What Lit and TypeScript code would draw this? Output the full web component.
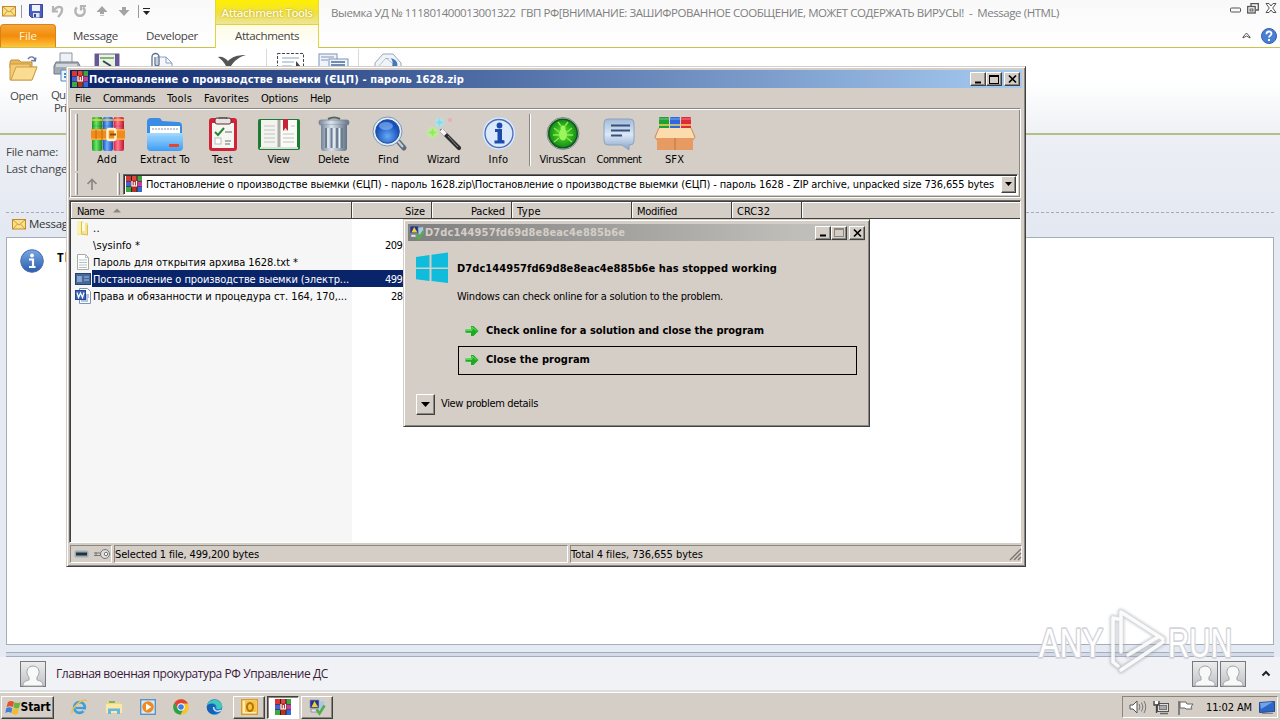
import { LitElement, html, css, svg } from "lit";
import { customElement, property } from "lit/decorators.js";
import { styleMap } from "lit/directives/style-map.js";

/* A single line of text whose tracking is adjusted so that it fills `w` pixels. */
@customElement("fit-text")
class FitText extends LitElement {
  @property() text = "";
  @property({ type: Number }) w = 0;
  static styles = css`
    :host { display: inline-block; white-space: pre; flex: none; }
  `;
  render() {
    return html`<span>${this.text}</span>`;
  }
  updated() {
    const s = this.renderRoot.querySelector("span") as HTMLElement;
    s.style.letterSpacing = "0";
    const n = this.text.length;
    const natural = s.getBoundingClientRect().width;
    s.style.letterSpacing = (this.w - natural) / n + "px";
    this.style.width = this.w + "px";
  }
}

const t = (text: string, w: number) => html`<fit-text .text=${text} .w=${w}></fit-text>`;
const ico = (w: number, h: number, body: unknown, vb = `0 0 ${w} ${h}`) =>
  html`<svg width=${w} height=${h} viewBox=${vb} fill="none">${body}</svg>`;

/* ---------- icons ---------- */
const mail = ico(14, 12, svg`<rect x=".5" y="1.500" width="13" height="9.500" fill="#fbe08a" stroke="#c08a2a"/><path d="M1 2l6 5 6-5M1 11l4.500-5M13 11L8.500 6" stroke="#c08a2a" stroke-width=".8"/>`);
const save = ico(14, 14, svg`<path d="M.5.5h13v13H2.500L.5 11.500z" fill="#4a5fc0" stroke="#37479c"/><rect x="3" y="1" width="8" height="6" fill="#eef2fb"/><rect x="4" y="9" width="6.500" height="4.500" fill="#dfe3ee"/><rect x="5" y="10" width="2" height="3" fill="#37479c"/>`);
const undo = ico(14, 14, svg`<path d="M2 2v5.500h5" stroke="#b4b4b4" stroke-width="2.200"/><path d="M3 6.500c3-5 8.500-4.500 8-.5 0 3-2 5-4 7" stroke="#b4b4b4" stroke-width="2.400"/>`);
const redo = ico(14, 14, svg`<path d="M4 3.500a4.700 4.700 0 1 0 6 0" stroke="#b4b4b4" stroke-width="2.400"/><path d="M8 6.500V2h5" stroke="#b4b4b4" stroke-width="2.200"/>`);
const upA = ico(14, 12, svg`<path d="M7 1l5.500 6H9v2H5V7H1.500z" fill="#a4a4a4"/><path d="M5 10.500h4" stroke="#c4c4c4"/>`);
const dnA = ico(14, 12, svg`<path d="M7 11l5.500-6H9V2H5v3H1.500z" fill="#a4a4a4"/>`);
const openF = ico(32, 28, svg`<path d="M2 7l1-2h8l2 2h11v6H2z" fill="#e8b75a" stroke="#c0903c"/><path d="M2 25L2 9h20v3h7L24 25z" fill="#f5ca70" stroke="#c79a48"/><path d="M8 12h21l-5 13H3z" fill="#fbdc93" stroke="#cf9f49"/><path d="M20 4c2-3 6-3 7 1M28 2.500l-.8 3.500-4-.5" stroke="#65799a" stroke-width="1.400"/>`);
const printer = ico(28, 30, svg`<path d="M7 0h12v10H7z" fill="#eef1f6" stroke="#8d95a3"/><path d="M3 9h22l2 4v8H1v-8z" fill="#a4aab3" stroke="#727982"/><path d="M3 11h21v3H3z" fill="#d3d7dc"/><path d="M8 17h15v11H8z" fill="#edf6ff" stroke="#4b89c8"/><path d="M11 21h8M11 24h8" stroke="#4b89c8" stroke-width="2"/>`);
const film = ico(26, 14, svg`<rect x="1" y="1" width="24" height="13" fill="#e9f3e4" stroke="#768"/><path d="M3 1v13M23 1v13" stroke="#66559b" stroke-width="4"/><path d="M6 5h14" stroke="#5da34f" stroke-width="1.500"/><path d="M9 8l8 5" stroke="#345" stroke-width="2"/>`);
const clip = ico(26, 14, svg`<path d="M8 4h9l6 6v4H8z" fill="#f4f7fc" stroke="#8ea2c0"/><path d="M17 4v6h6" stroke="#8ea2c0"/><path d="M3 14V4a3.500 3.500 0 0 1 7 0v7a2 2 0 0 1-4 0V4" stroke="#5b6f8e" stroke-width="1.300"/>`);
const check = ico(32, 14, svg`<path d="M2 4c4-1 7 1 10 4 4-4 9-6 18-6-7 2-12 6-15 11h-5C8 9 5 6 2 4z" fill="#555"/>`);
const selectB = ico(28, 14, svg`<rect x=".5" y=".5" width="26" height="15" stroke="#444" stroke-dasharray="3 1.500"/><path d="M5 5h17M5 9h12M5 13h10" stroke="#8fa3c4"/><path d="M19 8l5 6h-5z" fill="#444"/>`);
const copy = ico(32, 14, svg`<rect x="1" y="1" width="18" height="14" fill="#eff4fb" stroke="#7d93b5"/><path d="M3 4h13M3 7h7" stroke="#7d93b5"/><rect x="11" y="6" width="19" height="10" fill="#eff4fb" stroke="#7d93b5"/><path d="M13 9h14M13 12h14" stroke="#48699b" stroke-width="1.500"/>`);
const openMsg = ico(30, 14, svg`<path d="M2 10L10 1h10l8 9v5H2z" fill="#f0f3f8" stroke="#99a6bb"/><path d="M5 14L13 5l11 9" stroke="#b9c3d2"/><path d="M12 6c6-3 9 1 7 8h5c2-5-3-11-12-8z" fill="#3f78bd"/>`);

const rar = (s: number) => ico(s, s, svg`<rect x="0" y="0" width="16" height="16" fill="#1d2430"/><rect x="0" y="0" width="5" height="5" fill="#d8362f"/><rect x="6" y="0" width="4.500" height="5" fill="#e2433c"/><rect x="11.500" y="0" width="4.500" height="5" fill="#43a23c"/><rect x="0" y="5.500" width="5" height="5" fill="#4a5ed0"/><rect x="11.500" y="5.500" width="4.500" height="5" fill="#c63ea4"/><rect x="0" y="11" width="5" height="5" fill="#3ea93d"/><rect x="6" y="11" width="4.500" height="5" fill="#b9341f"/><rect x="11.500" y="11" width="4.500" height="5" fill="#3169d8"/><rect x="5" y="4.500" width="6.500" height="7" fill="#a8281f"/><path d="M6 5v5h4.500V5M8.300 6v4" stroke="#fff" stroke-width="1.200"/>`, "0 0 16 16");

const add = ico(36, 36, svg`<defs><linearGradient id="a1"><stop stop-color="#1d9a20"/><stop offset=".4" stop-color="#6be86a"/><stop offset="1" stop-color="#14801a"/></linearGradient><linearGradient id="a2"><stop stop-color="#1c53c8"/><stop offset=".4" stop-color="#6fb2ff"/><stop offset="1" stop-color="#1746b0"/></linearGradient><linearGradient id="a3"><stop stop-color="#d8203c"/><stop offset=".4" stop-color="#ff7a94"/><stop offset="1" stop-color="#c4142c"/></linearGradient></defs><rect x="3" y="1" width="10.500" height="34" rx="2" fill="url(#a1)"/><rect x="14" y="1" width="10" height="34" rx="2" fill="url(#a2)"/><rect x="24.500" y="1" width="10.500" height="34" rx="2" fill="url(#a3)"/><path d="M3 4h10M14 4h10M25 4h10" stroke="#f6d13e" stroke-width="2" opacity=".7"/><path d="M3 10h32" stroke="#2f3f5c" opacity=".25"/><rect x="2" y="13" width="34" height="11" rx="1" fill="#f08c1c"/><path d="M2 14h34M2 23h34" stroke="#ffc25c"/><path d="M13 13v11M7 14v9" stroke="#c26a12" stroke-width="1"/><rect x="18.500" y="13" width="8" height="11" rx="2" stroke="#fff3d0" stroke-width="2.500"/><path d="M21 18.500h6" stroke="#8b4a0c" stroke-width="2"/>`);
const extract = ico(38, 36, svg`<path d="M1 6q0-4 4-4h8q2 0 3 3l16 1q4 0 4 4v10H1z" fill="#3a8de4"/><path d="M4 10h30v9H4z" fill="#fff"/><path d="M6 13h26" stroke="#8694a8" stroke-dasharray="2 1"/><defs><linearGradient id="e1" x2="0" y2="1"><stop stop-color="#a4dbff"/><stop offset="1" stop-color="#3c9cf4"/></linearGradient></defs><path d="M1 17h36v14q0 4-4 4H5q-4 0-4-4z" fill="url(#e1)"/><path d="M2 21h34M2 25h34" stroke="#83c4f8" opacity=".7"/><rect x="23" y="28" width="10" height="3" rx="1" fill="#e8432c"/>`);
const test = ico(32, 36, svg`<rect x="2" y="2" width="28" height="33" rx="3" fill="#cf2438"/><rect x="5" y="7" width="22" height="25" fill="#f5f5f2"/><rect x="8" y="2" width="16" height="6" rx="2" fill="#e4e4e4" stroke="#662830"/><path d="M12 3v-1h8v1" stroke="#444"/><path d="M8 16l3 3 6-7" stroke="#268635" stroke-width="2"/><path d="M18 16h7M18 25h6M18 28h5" stroke="#999" stroke-width="1.500"/><rect x="8" y="22" width="6" height="6" fill="#fff" stroke="#bbb"/>`);
const view = ico(44, 36, svg`<rect x="1" y="3" width="42" height="31" rx="2" fill="#1d7b32"/><path d="M4 4h17v27H4z" fill="#f3f3f0"/><path d="M23 4h17v27H23z" fill="#fafaf7"/><path d="M20.500 4h3v28h-3z" fill="#a9aaa4"/><path d="M3 32h38" stroke="#ddd" stroke-width="2"/><path d="M7 10h11M7 14h11M7 18h11M7 22h11M7 26h11M26 18h11M26 14h4M34 10h4M26 22h11M26 26h11" stroke="#c3c3bd"/><path d="M26 3h5v12l-2.500-3-2.500 3z" fill="#c62437"/>`);
const trash = ico(34, 36, svg`<defs><linearGradient id="t1"><stop stop-color="#76869a"/><stop offset=".4" stop-color="#dae3ec"/><stop offset="1" stop-color="#627386"/></linearGradient></defs><path d="M11 3q6-3 12 0" stroke="#566" stroke-width="2"/><rect x="2" y="4" width="30" height="5" rx="2" fill="url(#t1)" stroke="#6b7b8f" stroke-width=".7"/><path d="M4 9h26v23q0 3-3 3H7q-3 0-3-3z" fill="url(#t1)"/><path d="M9 12v20M14.500 12v20M20 12v20M25 12v20" stroke="#6b7f93" stroke-width="2"/><path d="M11 12v20M17 12v20M22.500 12v20" stroke="#eef3f8" stroke-width="1.300"/>`);
const find = ico(36, 36, svg`<path d="M25 23l8 9" stroke="#5c6c7b" stroke-width="5" stroke-linecap="round"/><path d="M26 24l6 7" stroke="#c6d0d9" stroke-width="2"/><defs><radialGradient id="f1" cy=".7"><stop stop-color="#65aaf4"/><stop offset="1" stop-color="#1751bd"/></radialGradient></defs><circle cx="16.500" cy="15.500" r="14.500" fill="#e5eef8" stroke="#7c95b4"/><circle cx="16.500" cy="15.500" r="11.800" fill="url(#f1)" stroke="#244d94"/><ellipse cx="15" cy="10" rx="7" ry="4" fill="#8dbcf6" opacity=".6"/>`);
const wizard = ico(36, 36, svg`<path d="M16 15l17 17" stroke="#2e2e32" stroke-width="4.200" stroke-linecap="round"/><path d="M15 14l4.500 4.500" stroke="#f3f3f3" stroke-width="4"/><path d="M22 20l10 11" stroke="#8c8c90"/><circle cx="13.500" cy="6.500" r="5" fill="#9ee9f7" opacity=".55"/><path d="M13.500 2.500l1 3 3 1-3 1-1 3-1-3-3-1 3-1z" fill="#72dff4"/><circle cx="6.500" cy="16.500" r="6" fill="#b8f58c" opacity=".6"/><path d="M6.500 12l1.200 3.300 3.300 1.200-3.300 1.200-1.200 3.300-1.200-3.300L2 16.500l3.300-1.200z" fill="#8df04c"/><circle cx="24" cy="4" r="2" fill="#f4a3ad" opacity=".8"/>`);
const info = ico(36, 36, svg`<circle cx="18" cy="17.500" r="16.500" fill="#e4edfa" stroke="#c5cfdf"/><circle cx="18" cy="17.500" r="14" fill="#dce9fc" stroke="#4b6fb9" stroke-width="1.400"/><circle cx="18.500" cy="9.500" r="2.900" fill="#1c4cab"/><path d="M14 14.500h5.500v11h3M13.500 26h10" stroke="#1c4cab" stroke-width="3"/><path d="M18.500 14v12" stroke="#1c4cab" stroke-width="4"/>`);
const virus = ico(36, 36, svg`<circle cx="18" cy="17.500" r="16" fill="#c9d2c9" stroke="#7a8f80"/><defs><radialGradient id="v1"><stop stop-color="#64e832"/><stop offset="1" stop-color="#118a14"/></radialGradient></defs><circle cx="18" cy="17.500" r="14.300" fill="url(#v1)" stroke="#14532a" stroke-width="1.500"/><ellipse cx="18" cy="18.500" rx="4" ry="6" fill="#9bf55c"/><circle cx="18" cy="12" r="2.500" fill="#9bf55c"/><path d="M14 16l-5-4M22 16l5-4M14 19H8M22 19h6M14 22l-5 4M22 22l5 4M16 10l-3-4M20 10l3-4" stroke="#8aea4d" stroke-width="1.400"/>`);
const comment = ico(36, 36, svg`<defs><linearGradient id="c1" x2="0" y2="1"><stop stop-color="#a2bad8"/><stop offset=".5" stop-color="#dbe8f6"/><stop offset="1" stop-color="#86a3c9"/></linearGradient></defs><path d="M7 3h22q4 0 4 4v18q0 4-4 4h-1v5l-7-5H7q-4 0-4-4V7q0-4 4-4z" fill="url(#c1)" stroke="#8ba2c2"/><path d="M10 9.500h19M10 14.500h19M10 19.500h11" stroke="#37517c" stroke-width="2"/>`);
const sfx = ico(40, 36, svg`<rect x="4" y="1" width="10" height="16" rx="1" fill="#21a035"/><rect x="15" y="1" width="10" height="16" rx="1" fill="#2f69dd"/><rect x="26" y="1" width="10" height="16" rx="1" fill="#e02a3b"/><path d="M4 9h10M15 9h10M26 9h10" stroke="#f4d552" stroke-width="1.500"/><path d="M4 3h10M15 3h10M26 3h10" stroke="#fff" opacity=".4"/><path d="M2 21h36v13H2z" fill="#e79a62"/><path d="M20 21v13" stroke="#c4743e"/><path d="M4 12h32l3 10H1z" fill="#fbdcae"/><path d="M4 12l-4 9 2 3M36 12l4 9-2 3" stroke="#d98a50"/>`);

const folder = ico(16, 16, svg`<path d="M2 1h5l2 2h4v12H2z" fill="#f5e496"/><path d="M2 1h4v13H2z" fill="#fbf0b4"/><path d="M7 3h3v8H7z" fill="#fffbe0"/><path d="M6.500 2v12l6 1V5" stroke="#dcc04e"/>`);
const txt = ico(16, 16, svg`<path d="M2.500.5h8l3 3v12h-11z" fill="#fff" stroke="#a7aaa7"/><path d="M10.500.5v3h3M4 6h8M4 8.500h8M4 11h8M4 13.500h8" stroke="#b7c1c4"/>`);
const exe = ico(16, 16, svg`<rect x=".5" y="2.500" width="15" height="11" fill="#45679c" stroke="#24406e"/><rect x="2" y="5" width="5" height="6" fill="#86a5cc"/><path d="M9 6h5M9 9h5" stroke="#a8bddd"/>`);
const doc = ico(16, 16, svg`<path d="M4.500.5h8l3 3v12h-11z" fill="#fff" stroke="#7b93bd"/><path d="M11 7h3M11 9h3M8 11h5M6 13h7" stroke="#6b8bc4"/><rect x=".5" y="2.500" width="10" height="9" fill="#3b66b5" stroke="#24468a"/><path d="M2 4.500l1.500 5 2-4.500 2 4.500L9 4.500" stroke="#fff" stroke-width="1.200"/>`);
const arrowUp = ico(14, 14, svg`<path d="M7 13V3M2.500 7L7 2.500 11.500 7" stroke="#8a8783" stroke-width="1.700"/>`);
const tri = ico(9, 5, svg`<path d="M0 0h9L4.500 5z" fill="#000"/>`);

const infoBall = (s: number) => ico(s, s, svg`<defs><linearGradient id="ib" x2="0" y2="1"><stop stop-color="#78a8e2"/><stop offset="1" stop-color="#2a5cb0"/></linearGradient></defs><circle cx="12" cy="12" r="11.300" fill="url(#ib)" stroke="#4a6fae"/><circle cx="12" cy="6.500" r="1.900" fill="#fff"/><path d="M9 10.500h4v7M9 18h6.500" stroke="#fff" stroke-width="2.200"/>`, "0 0 24 24");
const helpBall = ico(16, 16, svg`<circle cx="8" cy="8" r="7.500" fill="#4a80d4" stroke="#3660ac"/><path d="M5.500 6.200c0-3.500 5-3.500 5-.6 0 2-2.500 2-2.500 4" stroke="#fff" stroke-width="1.800"/><rect x="7" y="11" width="2" height="2" fill="#fff"/>`);
const winMin = ico(11, 10, svg`<rect x=".5" y="5" width="10" height="4" rx="1" stroke="#555"/>`);
const winRes = ico(12, 11, svg`<path d="M4 3V.7h7.300V7H9" stroke="#555" stroke-width="1.300"/><rect x=".7" y="3.500" width="7.500" height="6.500" stroke="#555" stroke-width="1.300"/><rect x="3" y="6" width="3" height="2" stroke="#555"/>`);
const winX = ico(12, 10, svg`<path d="M1 .5h3l2 2.500L8 .5h3L7.700 5 11 9.500H8L6 7 4 9.500H1L4.300 5z" fill="#fff" stroke="#555"/>`);

const person = ico(26, 26, svg`<defs><linearGradient id="pg" x2="0" y2="1"><stop stop-color="#ededee"/><stop offset="1" stop-color="#bfc1c4"/></linearGradient></defs><rect x=".5" y=".5" width="25" height="25" fill="url(#pg)" stroke="#77797d"/><path d="M3 25c0-4 2-5 6-6v-3c-4-4-2-11 4-11s8 7 4 11v3c4 1 6 2 6 6z" fill="#f8f8f8" stroke="#a2a4a7"/>`);

const winFlag = ico(16, 15, svg`<path d="M3 2q3-2 6 0L8 7Q5 5.500 1.500 7z" fill="#e5512a"/><path d="M9.500 2.300q3 1.500 6 0L14 8q-3 1.200-5.500-.5z" fill="#6cb33e"/><path d="M1.300 8q3-1.500 6 0l-1 5q-3-2-6 0z" fill="#3f7fd8"/><path d="M8 8.500q3 1.300 6 0L12.500 14q-3 1.400-5.500-.5z" fill="#f5bb22"/>`);
const ie = ico(17, 16, svg`<circle cx="8.500" cy="8.500" r="5.300" stroke="#3c9edb" stroke-width="2.800"/><path d="M5 9h9" stroke="#3c9edb" stroke-width="2.200"/><path d="M12 10.500h4v2h-4z" fill="#d4cec7"/><path d="M1 14.500C0 9 11-1 16 1.500" stroke="#efc144" stroke-width="1.500"/>`);
const explorer = ico(18, 16, svg`<path d="M2 2h5l1 1.500h8V8H2z" fill="#efd782"/><path d="M1 5h16v9H1z" fill="#fae8a4"/><path d="M3 15V9.500h12V15h-3v-3H6v3z" fill="#67b7de"/><path d="M4 3h6" stroke="#58a95c" stroke-width="1.500"/>`);
const wmp = ico(16, 16, svg`<rect x=".7" y=".7" width="14.600" height="14.600" fill="#d5e9f8" stroke="#5b93c9" stroke-width="1.400"/><circle cx="8" cy="8" r="5.800" fill="#f08a1d"/><path d="M6 4.500L11.500 8 6 11.500z" fill="#fff"/>`);
const chrome = ico(16, 16, svg`<circle cx="8" cy="8" r="7.800" fill="#f6c52b"/><path d="M1.300 4A7.800 7.800 0 0 1 15 4.500H8L5 10z" fill="#df4334"/><path d="M1.300 4A7.800 7.800 0 0 0 7.500 15.800L10.500 10 5 9.700z" fill="#2ba14b"/><circle cx="8" cy="8" r="3.700" fill="#fff"/><circle cx="8" cy="8" r="2.800" fill="#3d7fe8"/>`);
const edge = ico(17, 16, svg`<circle cx="8.500" cy="8" r="7.800" fill="#1b78cf"/><path d="M1 7C2-1 15-1 16.200 6.500c.5 4-5 4.500-6 3C12 4 4 3 1 7z" fill="#41c8b8"/><path d="M1 7c3-4 8-2 8 .5C6 8 6 13 11 14 5 17 0 12 1 7z" fill="#1561b5"/><path d="M7.500 8c0 4 4 5.500 8 3" stroke="#d4e8f4" stroke-width="1.300"/>`);
const outlook = ico(17, 16, svg`<rect x=".7" y=".7" width="15.600" height="14.600" fill="#fdeeb4" stroke="#df9a1f" stroke-width="1.400"/><rect x="4" y="2" width="11" height="11" fill="#f6c343"/><ellipse cx="9" cy="8" rx="3" ry="4" stroke="#b87208" stroke-width="2"/>`);
const werf = (s: number) => ico(s, s, svg`<path d="M1 1h9v8H1z" fill="#22358c" stroke="#8b94b0" stroke-width=".7"/><path d="M5.500 2L9 8H2.500z" fill="#f4d02a"/><path d="M2 10h7v3H2z" fill="#e4e7ee" stroke="#667" stroke-width=".6"/><path d="M10 3l5-1 .5 7-5 1z" fill="#a9c8e4"/><path d="M7.500 10.500l3 4 5-8" stroke="#54ad50" stroke-width="2.600"/>`, "0 0 16 16");
const speaker = ico(17, 14, svg`<path d="M1 5h3l4-4v12L4 9H1z" fill="#fff" stroke="#555"/><path d="M10 4q2 3 0 6M12.500 2.500q3 4.500 0 9M15 1q3.500 6 0 12" stroke="#777"/>`);
const net = ico(17, 15, svg`<rect x="4.500" y="3.500" width="11" height="8" fill="#ddd" stroke="#555"/><rect x="6.500" y="5.500" width="7" height="4" fill="#aaa" stroke="#777"/><path d="M7 13.500h8" stroke="#666" stroke-width="1.500"/><path d="M1 1v4h5V1M3.500 5v8" stroke="#444" stroke-width="1.300"/><path d="M2 1h3v3H2z" fill="#fff"/>`);
const flag = ico(17, 15, svg`<path d="M2 1v14" stroke="#666" stroke-width="1.500"/><path d="M3 2h6l1 2h6l-2 3 1 2H9L8 8H3z" fill="#fff" stroke="#666"/>`);
const desk = ico(16, 13, svg`<path d="M.5 1.500l15-1v10l-15 1z" fill="#2d67c6" stroke="#234a8c"/><path d="M1 2l13-1L2 8z" fill="#6fa3ea"/><path d="M3 12.500h11" stroke="#888"/>`);
const drive = ico(15, 8, svg`<rect x=".5" y=".5" width="14" height="7" rx="2" fill="#9aabb4" stroke="#b5c1c6"/><rect x="2" y="2.500" width="11" height="3" fill="#26323a"/>`);
const key = ico(18, 12, svg`<path d="M1 5h9M1 7.500h9M3 4v3" stroke="#777"/><circle cx="12" cy="6" r="4.500" fill="#ddd" stroke="#777"/><circle cx="13" cy="6" r="1.700" fill="#fff" stroke="#777"/>`);
const logo8 = ico(34, 32, svg`<path d="M1 5L14.500 3v12.500H1zM16.500 2.700L33 .5v15H16.500zM1 17h13.500v12L1 27.200zM16.500 17H33v14l-16.500-2z" fill="#10bcdc"/>`);
const green = ico(16, 16, svg`<path d="M2 5h6V1.500L15 8.500 8 15v-4H2z" fill="#bfe4ba" opacity=".8"/><path d="M1.500 6.500H7V3h2.500l5 5-5 5H7V9.700H1.500z" fill="#1fa824"/><path d="M2 7.300h6V4l4.500 3.800" stroke="#6fe063"/>`);
const tickMin = ico(9, 9, svg`<path d="M1 7.500h6" stroke="#000" stroke-width="2"/>`);
const tickMax = (c: string) => ico(10, 9, svg`<rect x=".5" y=".5" width="9" height="8" stroke=${c}/><path d="M0 1h10" stroke=${c} stroke-width="2"/>`);
const tickX = ico(9, 8, svg`<path d="M1 0.500l7 7M8 .5l-7 7" stroke="#000" stroke-width="1.700"/>`);

const tools: [unknown, string, number, number][] = [
  [add, "Add", 20, 58], [extract, "Extract To", 50, 58], [test, "Test", 21, 57], [view, "View", 22, 55],
  [trash, "Delete", 31, 55], [find, "Find", 21, 55], [wizard, "Wizard", 33, 55], [info, "Info", 20, 55],
];
const tools2: [unknown, string, number, number][] = [
  [virus, "VirusScan", 46, 57], [comment, "Comment", 45, 56], [sfx, "SFX", 19, 55],
];
const tool = ([i, l, w, box]: [unknown, string, number, number]) =>
  html`<div class="tool" style=${styleMap({ width: box + "px" })}>${i}${t(l, w)}</div>`;

const cols: [string, number, number, boolean][] = [
  ["Name", 27, 281, false], ["Size", 20, 80, true], ["Packed", 34, 80, true],
  ["Type", 24, 120, false], ["Modified", 40, 100, false], ["CRC32", 33, 70, false],
];
const rows: [unknown, string, number, string, number, boolean][] = [
  [folder, "..", 7, "", 0, false],
  ["", "\\sysinfo *", 47, "209,", 20, false],
  [txt, "Пароль для открытия архива 1628.txt *", 205, "", 0, false],
  [exe, "Постановление о производстве выемки (электр...", 256, "499,", 20, true],
  [doc, "Права и обязанности и процедура ст. 164, 170,...", 254, "28,", 14, false],
];

@customElement("app-root")
class AppRoot extends LitElement {
  static styles = css`
    :host { display: block; position: relative; width: 1280px; height: 720px; overflow: hidden; background: #fff;
      font: 11px/14px "DejaVu Sans Condensed", "DejaVu Sans", sans-serif; font-stretch: condensed; color: #000; }
    * { box-sizing: border-box; }
    svg { display: block; flex: none; overflow: visible; }
    .desktop { display: flex; flex-direction: column; height: 720px; }
    .outlook { height: 692px; display: flex; flex-direction: column; color: #444; font-family: "Open Sans", "Noto Sans", sans-serif; font-stretch: normal; font-size: 11.5px; }
    .top { display: grid; grid-template: 24px 24px / 215px 104px 1fr; height: 48px; background: linear-gradient(#f9f9fa, #fff); }
    .qat { display: flex; align-items: center; gap: 8px; padding: 0 0 2px 2px; }
    .qat .sp { width: 1px; height: 13px; background: #999; margin: 0 -1px 0 -3px; }
    .qat .sp.end { margin: 0 -4px 0 -1px; }
    .qat .more { border-top: 1px solid #222; padding-top: 2px; }
    .ctx { background: linear-gradient(#fff000, #f1e03e 55%, #eee59a); border: 1px solid #e5d83a; border-width: 0 1px; color: #fffbe0; text-align: center; padding-top: 6px; text-shadow: 0 0 2px #a89a20; font-weight: 600; }
    .caption { display: flex; justify-content: space-between; padding: 6px 3px 0 12px; color: #808080; }
    .caption .btns { display: flex; gap: 6px; margin-top: -3px; }
    .tabs { display: flex; border-bottom: 1px solid #cdc14c; align-items: stretch; }
    .filetab { width: 56px; height: 23px; border-radius: 4px 4px 0 0; border: 1px solid #d88316; border-bottom: 0; background: linear-gradient(#f6a73a, #f28c0b 50%, #ffc63c); color: #fff3d8; display: flex; justify-content: center; padding-top: 4px; }
    .tab { padding: 5px 0 0 17px; }
    .tab.dev { padding-left: 28px; }
    .ctxtab { border: 1px solid #e0d43e; border-width: 1px 1px 0; background: linear-gradient(#fdfbe4, #fff); text-align: center; padding-top: 4px; }
    .right { border-bottom: 1px solid #cdc14c; display: flex; justify-content: flex-end; align-items: center; gap: 10px; padding-right: 3px; }
    .ribbon { height: 87px; background: linear-gradient(#fff 40%, #eef1f5); border-bottom: 2px solid #b5bf85; display: flex; padding-top: 5px; }
    .rb { display: flex; flex-direction: column; }
    .rb1 { width: 48px; gap: 6px; padding-top: 2px; align-items: center; }
    .rb2 { width: 40px; gap: 5px; padding-left: 5px; }
    .rb2 .l { display: flex; flex-direction: column; line-height: 13px; }
    .rb2 .l fit-text:last-child { margin-left: 1px; }
    .rb2 .l fit-text:first-child { margin-left: -2px; }
    .rs { display: flex; }
    .rs .sep { width: 1px; height: 20px; background: #d7dae0; margin-top: -4px; }
    .s1 { margin-left: 6px; } .s2 { margin-left: 29px; } .s3 { margin-left: 41px; } .s4 { margin-left: 18px; } .s5 { margin: 0 4px 0 10px; } .s6 { margin-left: 14px; }
    .s7 { margin: 0 8px 0 9px; }
    .info { height: 102px; background: linear-gradient(#edeff5, #e3e8f1); padding: 10px 6px 0; display: flex; flex-direction: column; }
    .info .line { height: 17px; }
    .dash { border-top: 1px dashed #a3aac0; margin-top: 33px; }
    .mtab { display: flex; gap: 3px; align-items: center; height: 22px; padding-left: 6px; color: #333; }
    .bodyrow { background: #e6eaf2; padding: 0 6px; height: 420px; }
    .bodybox { height: 408px; border: 1px solid #a4acc0; background: #fff; display: flex; gap: 13px; padding: 11px 13px; color: #000; }
    .bodybox b { margin-top: 2px; }
    .split { margin-top: 7px; height: 5px; border: 1px solid #a4acc0; border-width: 1px 0; background: #d5dbe8; }
    .people { flex: 1; background: #f0f2f6; display: flex; align-items: center; padding: 0 10px 0 20px; color: #3c2038; font-size: 12px; border-bottom: 2px solid #dedede; }
    .people .nm { margin-left: 10px; flex: 1; }
    .people .r { display: flex; gap: 2px; align-items: center; }
    .people .r .car { margin-left: 14px; }
    .taskbar { height: 28px; background: #d5cec7; border-top: 1px solid #fff; display: flex; align-items: center; padding: 1px 2px 0 1px; }
    .raised { border: 1px solid; border-color: #fff #404040 #404040 #fff; box-shadow: inset -1px -1px #8a8680; background: #d5cec7; display: flex; align-items: center; justify-content: center; }
    .start { width: 53px; height: 23px; font-weight: bold; font-size: 12px; }
    .quick { display: flex; gap: 17px; padding: 0 10px 0 17px; }
    .tb { width: 32px; height: 23px; margin-right: 2px; }
    .tb.on { background: #fff; border-color: #404040 #fff #fff #404040; box-shadow: inset 1px 1px #8a8680; }
    .tray { margin-left: auto; width: 156px; height: 22px; border: 1px solid; border-color: #8a8680 #fff #fff #8a8680; display: flex; align-items: center; padding-left: 6px; gap: 7px; }
    .tray .clk { margin: 1px 0 0 5px; }
    .win { position: absolute; background: #d5cec7; border: 1px solid; border-color: #d5cec7 #404040 #404040 #d5cec7; box-shadow: inset 1px 1px #fff, inset -1px -1px #8a8680; padding: 3px; display: flex; flex-direction: column; }
    .rarwin { left: 66px; top: 66px; width: 960px; height: 501px; }
    .bar { display: flex; align-items: center; height: 18px; flex: none; }
    .title { background: linear-gradient(90deg, #0a246a, #a6caf0); color: #fff; font-weight: bold; padding: 0 2px 0 2px; gap: 1px; }
    .title > fit-text { padding-top: 1px; }
    .title .b { display: flex; margin-left: auto; }
    .cb { width: 16px; height: 14px; }
    .cb.x { margin-left: 2px; }
    .menu { height: 20px; padding: 1px 0 0 5px; gap: 12px; align-items: center; display: flex; }
    .frame { height: 90px; border: 1px solid; border-color: #8a8680 #fff #fff #8a8680; box-shadow: inset 1px 1px #fff, inset -1px -1px #8a8680; display: flex; flex-direction: column; margin: 0 1px 0 -1px; }
    .tools { display: flex; height: 62px; padding: 5px 0 0 5px; }
    .grip { width: 3px; border-left: 1px solid #fff; border-right: 1px solid #8a8680; flex: none; }
    .tool { display: flex; flex-direction: column; align-items: center; gap: 1px; flex: none; padding-top: 2px; }
    .vsep { width: 2px; margin: 0 3px 4px 3px; border-left: 1px solid #8a8680; border-right: 1px solid #fff; height: 52px; }
    .addr { display: flex; height: 26px; padding: 2px 2px 2px 5px; align-items: center; }
    .addr .grip { height: 22px; }
    .addr .up { width: 39px; padding-left: 7px; }
    .addr .box { flex: 1; margin-left: 3px; height: 21px; background: #fff; border: 1px solid; border-color: #666 #fff #fff #666; box-shadow: inset 1px 1px #333; display: flex; align-items: center; padding: 1px 1px 1px 2px; gap: 4px; }
    .addr .box > fit-text { padding-top: 2px; }
    .addr .dd { margin-left: auto; width: 15px; height: 17px; }
    .list { flex: 1; margin: 2px 1px 2px -1px; border: 1px solid; border-color: #666 #fff #fff #666; box-shadow: inset 1px 0 #404040; background: linear-gradient(90deg, #f6f6f6 282px, #fff 282px); display: flex; flex-direction: column; padding-left: 1px; }
    .heads { display: flex; height: 18px; background: #d5cec7; border-top: 1px solid #404040; border-bottom: 1px solid #404040; align-items: stretch; }
    .h { border-right: 1px solid #404040; box-shadow: inset 1px 1px #fff; padding: 3px 6px 0 5px; display: flex; gap: 9px; }
    .h:first-child { padding-left: 6px; }
    .h.rt { justify-content: flex-end; }
    .h.last { flex: 1; border: 0; }
    .row { display: flex; height: 17px; align-items: center; }
    .row .i { width: 17px; height: 16px; margin-left: 4px; flex: none; }
    .row .n { width: 259px; flex: none; height: 17px; padding-top: 3px; padding-left: 1px; }
    .row .z { width: 74px; padding: 3px 0 0 34px; height: 17px; display: flex; }
    .row .n, .row .z { line-height: 13px; }
    .row .z.s { padding-left: 40px; }
    .row.sel .n, .row.sel .z { background: #0a246a; color: #fff; }
    .status { display: flex; height: 18px; gap: 2px; }
    .status > div { border: 1px solid; border-color: #8a8680 #fff #fff #8a8680; display: flex; align-items: center; }
    .status .a { width: 42px; gap: 4px; padding-left: 3px; }
    .status .bb { width: 454px; }
    .status .c { flex: 1; justify-content: space-between; }
    .status fit-text { padding-top: 1px; }
    .dlg { left: 403px; top: 219px; width: 467px; height: 208px; padding: 4px 4px; }
    .dlg .title { background: linear-gradient(90deg, #7f7f7f, #c0beb9 85%); color: #d5cec7; padding: 0 0 0 1px; gap: 1px; height: 17px; }
    .dlg .title > fit-text { padding-top: 0; }
    .dbody { display: grid; grid-template-columns: 42px 1fr; padding: 10px 8px 0 7px; }
    .dbody > svg { margin-top: 1px; }
    .dmain { display: flex; flex-direction: column; padding-top: 11px; }
    .dmain .sub { margin-top: 14px; }
    .opts { display: flex; flex-direction: column; padding-top: 13px; margin-left: 1px; }
    .opt { height: 29px; display: flex; align-items: center; gap: 6px; padding: 0 0 2px 5px; border: 1px solid transparent; width: 399px; font-weight: bold; }
    .opt.f { border-color: #000; padding-bottom: 1px; }
    .det { display: flex; gap: 6px; padding: 19px 0 0 8px; }
    .det .db { width: 19px; height: 21px; }
    .det .dt { padding-top: 3px; }
    .wm { position: absolute; left: 1036px; top: 606px; }
    .wm text { font: 41px "Liberation Sans", sans-serif; }
    .wm .glow { filter: blur(1.2px); }
  `;
  render() {
    const play = "M82 13l-5-1v44l5 4M85 46V6l42 27M92 49l30-18M85 64l42-28";
    return html`
      <div class="desktop">
        <div class="outlook">
          <div class="top">
            <div class="qat">${mail}<span class="sp"></span>${save}${undo}${redo}${upA}${dnA}<span class="sp end"></span><span class="more">${ico(7, 4, svg`<path d="M0 0h7L3.500 4z" fill="#222"/>`)}</span></div>
            <div class="ctx">${t("Attachment Tools", 91)}</div>
            <div class="caption">${t("Выемка УД № 111801400013001322  ГВП РФ[ВНИМАНИЕ: ЗАШИФРОВАННОЕ СООБЩЕНИЕ, МОЖЕТ СОДЕРЖАТЬ ВИРУСЫ!  -  Message (HTML)", 728)}<span class="btns">${winMin}${winRes}${winX}</span></div>
            <div class="tabs"><div class="filetab">${t("File", 18)}</div><div class="tab">${t("Message", 45)}</div><div class="tab dev">${t("Developer", 52)}</div></div>
            <div class="ctxtab">${t("Attachments", 64)}</div>
            <div class="right">${ico(9, 7, svg`<path d="M1 5L4.500 1 8 5v1L4.500 4 1 6z" stroke="#555"/>`)}${helpBall}</div>
          </div>
          <div class="ribbon">
            <div class="rb rb1">${openF}${t("Open", 28)}</div>
            <div class="rb rb2">${printer}<div class="l">${t("Qu", 14)}${t("Pri", 12)}</div></div>
            <div class="rs"><span class="s1">${film}</span><span class="s2">${clip}</span><span class="s3">${check}</span><span class="s4"></span><i class="sep"></i><span class="s5">${selectB}</span><span class="s7">${copy}</span><i class="sep"></i><span class="s6">${openMsg}</span></div>
          </div>
          <div class="info">
            <div class="line">${t("File name:", 52)}</div>
            <div class="line">${t("Last changed:", 71)}</div>
            <div class="dash"></div>
            <div class="mtab">${mail}${t("Message", 45)}</div>
          </div>
          <div class="bodyrow">
            <div class="bodybox">${infoBall(24)}<b>${t("This", 28)}</b></div>
            <div class="split"></div>
          </div>
          <div class="people">${person}<span class="nm">${t("Главная военная прокуратура РФ Управление ДС", 272)}</span><span class="r">${person}${person}<span class="car">${ico(8, 5, svg`<path d="M.5 4.500L4 1l3.500 3.500" stroke="#222" stroke-width="2"/>`)}</span></span></div>
        </div>
        <div class="taskbar">
          <div class="raised start">${winFlag}${t("Start", 30)}</div>
          <div class="quick">${ie}${explorer}${wmp}${chrome}${edge}</div>
          <div class="raised tb">${outlook}</div><div class="raised tb on">${rar(16)}</div><div class="raised tb">${werf(16)}</div>
          <div class="tray">${speaker}${net}${flag}<span class="clk">${t("11:02 AM", 46)}</span>${desk}</div>
        </div>
      </div>

      <div class="win rarwin">
        <div class="bar title">${rar(16)}${t("Постановление о производстве выемки (ЄЦП) - пароль 1628.zip", 375)}
          <div class="b"><span class="raised cb">${tickMin}</span><span class="raised cb">${tickMax("#000")}</span><span class="raised cb x">${tickX}</span></div></div>
        <div class="menu">${t("File", 16)}${t("Commands", 52)}${t("Tools", 25)}${t("Favorites", 45)}${t("Options", 37)}${t("Help", 21)}</div>
        <div class="frame">
          <div class="tools"><span class="grip"></span>${tools.map(tool)}<span class="vsep"></span>${tools2.map(tool)}</div>
          <div class="addr"><span class="grip"></span><span class="up">${arrowUp}</span><span class="grip"></span>
            <div class="box">${rar(16)}${t("Постановление о производстве выемки (ЄЦП) - пароль 1628.zip\\Постановление о производстве выемки (ЄЦП) - пароль 1628 - ZIP archive, unpacked size 736,655 bytes", 848)}<span class="raised dd">${ico(7, 4, svg`<path d="M0 0h7L3.500 4z" fill="#000"/>`)}</span></div></div>
        </div>
        <div class="list">
          <div class="heads">${cols.map(([l, w, box, r], i) => html`<div class="h ${r ? "rt" : ""}" style=${styleMap({ width: box + "px" })}>${t(l, w)}${i === 0 ? ico(8, 12, svg`<path d="M0 7.500h8l-4-4z" fill="#8a8783"/>`) : ""}</div>`)}<div class="h last"></div></div>
          ${rows.map(([i, n, w, z, zw, s]) => html`<div class="row ${s ? "sel" : ""}"><span class="i">${i}</span><span class="n">${t(n, w)}</span><span class="z ${zw === 14 ? "s" : ""}">${z ? t(z, zw) : ""}</span></div>`)}
        </div>
        <div class="status"><div class="a">${drive}${key}</div><div class="bb">${t("Selected 1 file, 499,200 bytes", 144)}</div><div class="c">${t("Total 4 files, 736,655 bytes", 132)}${ico(12, 12, svg`<path d="M1 12L12 1M5 12l7-7M9 12l3-3" stroke="#77736e" stroke-width="1.300"/>`)}</div></div>
      </div>

      <div class="win dlg">
        <div class="bar title">${werf(15)}${t("D7dc144957fd69d8e8eac4e885b6e", 200)}
          <div class="b"><span class="raised cb">${tickMin}</span><span class="raised cb">${tickMax("#8a8680")}</span><span class="raised cb x">${tickX}</span></div></div>
        <div class="dbody">${logo8}
          <div class="dmain"><b>${t("D7dc144957fd69d8e8eac4e885b6e has stopped working", 320)}</b><span class="sub">${t("Windows can check online for a solution to the problem.", 266)}</span>
            <div class="opts"><div class="opt">${green}${t("Check online for a solution and close the program", 278)}</div><div class="opt f">${green}${t("Close the program", 104)}</div></div>
          </div>
        </div>
        <div class="det"><span class="raised db">${tri}</span><span class="dt">${t("View problem details", 97)}</span></div>
      </div>

      <svg class="wm" width="200" height="70" viewBox="0 0 200 70" fill="none" stroke-linejoin="round" stroke-linecap="round">
        <path class="glow" d=${play} stroke="#9b9fa6" stroke-opacity=".45" stroke-width="7"/>
        <g stroke="#d3d5d9" stroke-width="3.500" fill="#fff" paint-order="stroke"><text x="3" y="51" textLength="64" lengthAdjust="spacingAndGlyphs">ANY</text><text x="132" y="51" textLength="64" lengthAdjust="spacingAndGlyphs">RUN</text></g>
        <path d=${play} stroke="#fff" stroke-opacity=".9" stroke-width="3.500"/>
      </svg>`;
  }
}
